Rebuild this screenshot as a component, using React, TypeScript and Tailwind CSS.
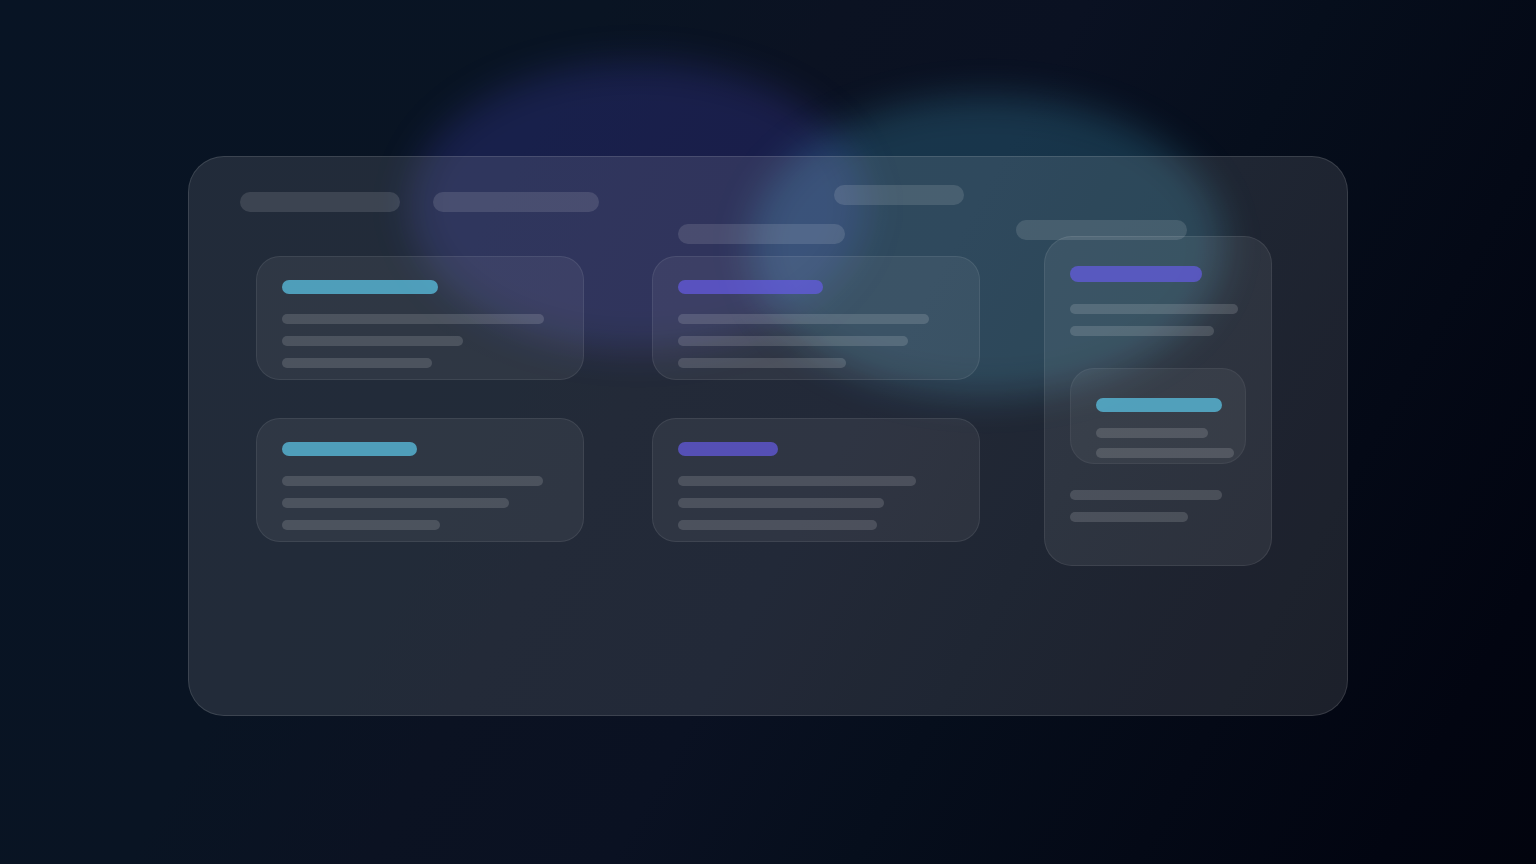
type CardProps = {
  title: string;
  lines: string[];
};

// Pills of the top bar, each one with its own width and drop
const pills = [
  "mt-[7px] w-[160px]",
  "mt-[7px] ml-[33px] w-[166px]",
  "mt-[39px] ml-[79px] w-[167px]",
  "-ml-[11px] w-[130px]",
  "mt-[35px] ml-[52px] w-[171px]",
];

const cards: CardProps[] = [
  {
    title: "w-[156px] bg-[#5ccbec]/70",
    lines: ["w-[262px]", "w-[181px]", "w-[150px]"],
  },
  {
    title: "w-[145px] bg-[#655be6]/70",
    lines: ["w-[251px]", "w-[230px]", "w-[168px]"],
  },
  {
    title: "w-[135px] bg-[#5ccbec]/70",
    lines: ["w-[261px]", "w-[227px]", "w-[158px]"],
  },
  {
    title: "w-[100px] bg-[#655be6]/70",
    lines: ["w-[238px]", "w-[206px]", "w-[199px]"],
  },
];

const Line = ({ width }: { width: string }) => {
  return <div className={`h-[10px] max-w-full rounded-full bg-white/14 ${width}`} />;
};

const Card = ({ title, lines }: CardProps) => {
  return (
    <article className="rounded-3xl border border-white/8 bg-white/6 px-[25px] pt-[23px] pb-[11px]">
      <div className={`h-[14px] rounded-full ${title}`} />
      <div className="mt-5 flex flex-col gap-3">
        {lines.map((width) => (
          <Line key={width} width={width} />
        ))}
      </div>
    </article>
  );
};

const SidePanel = () => {
  return (
    <aside className="-mt-5 w-[228px] shrink-0 rounded-[28px] border border-white/8 bg-white/7 px-[25px] pt-[29px] pb-[43px]">
      <div className="h-4 w-[132px] rounded-full bg-[#655be6]/70" />
      <div className="mt-[22px] flex flex-col gap-3">
        <Line width="w-[168px]" />
        <Line width="w-[144px]" />
      </div>
      <div className="mt-8 rounded-3xl border border-white/5 bg-white/5 pt-[29px] pr-[11px] pb-[5px] pl-[25px]">
        <div className="h-[14px] w-[126px] rounded-full bg-[#5ccbec]/70" />
        <div className="mt-4 flex flex-col gap-[10px]">
          <Line width="w-[112px]" />
          <Line width="w-[138px]" />
        </div>
      </div>
      <div className="mt-[26px] flex flex-col gap-3">
        <Line width="w-[152px]" />
        <Line width="w-[118px]" />
      </div>
    </aside>
  );
};

const App = () => {
  return (
    <main className="relative min-h-screen overflow-hidden bg-[linear-gradient(119deg,#081424_0%,#091423_30%,#0b1222_42%,#0a1122_54%,#060e1c_66%,#040916_80%,#020511_92%,#02040e_100%)] px-[188px] pt-[156px] pb-[148px]">
      {/* Glow behind the glass */}
      <div className="absolute top-[62px] left-[410px] h-[288px] w-[456px] rounded-[50%] bg-[#5650ea]/20 blur-[18px]" />
      <div className="absolute top-[96px] left-[750px] h-[300px] w-[474px] rounded-[50%] bg-[#50caf0]/20 blur-[18px]" />

      <section className="relative rounded-[36px] border border-white/12 bg-white/10 pb-[149px]">
        <header className="flex h-[99px] items-start pt-7 pl-[51px]">
          {pills.map((pill) => (
            <div key={pill} className={`h-5 rounded-full bg-white/12 ${pill}`} />
          ))}
        </header>
        <div className="flex items-start gap-16 pr-[75px] pl-[67px]">
          <div className="grid flex-1 grid-cols-2 gap-x-[68px] gap-y-[38px]">
            {cards.map((card) => (
              <Card key={card.title} title={card.title} lines={card.lines} />
            ))}
          </div>
          <SidePanel />
        </div>
      </section>
    </main>
  );
};

export default App;
